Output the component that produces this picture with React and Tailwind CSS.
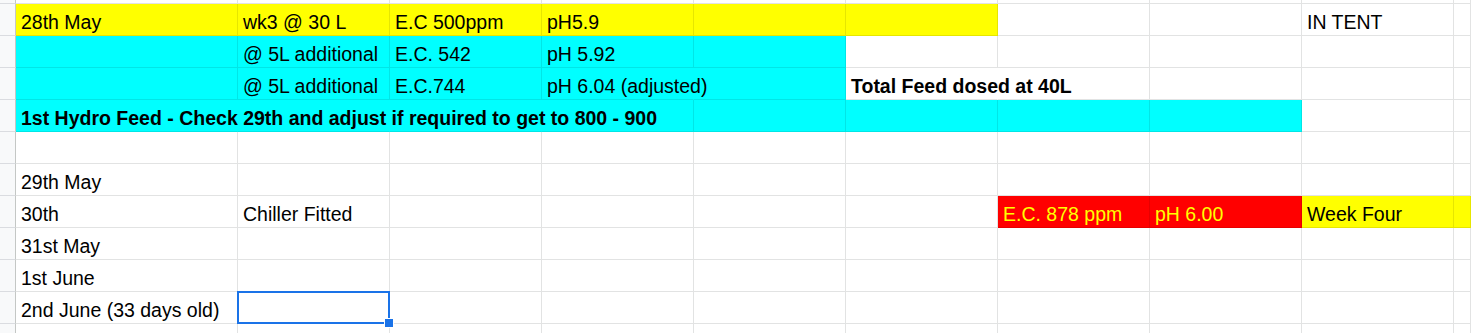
import React from "react";

const V = {
  w: "bg-white border-[#e2e3e3]",
  y: "bg-[#ffff00] border-[#e6e600]",
  c: "bg-[#00ffff] border-[#00e6e6]",
  r: "bg-[#ff0000] border-[#e60000]",
};

const WIDTHS = [
  "w-[222px]",
  "w-[152px]",
  "w-[152px]",
  "w-[152px]",
  "w-[152px]",
  "w-[152px]",
  "w-[152px]",
  "w-[152px]",
  "w-[152px]",
  "flex-1",
];

const rows = [
  [
    ["y", "28th May"],
    ["y", "wk3 @ 30 L"],
    ["y", "E.C 500ppm"],
    ["y", "pH5.9"],
    ["y"],
    ["y"],
    ["w"],
    ["w"],
    ["w", "IN TENT"],
    ["w"],
  ],
  [
    ["c"],
    ["c", "@ 5L additional"],
    ["c", "E.C. 542"],
    ["c", "pH 5.92"],
    ["c"],
    ["w"],
    ["w"],
    ["w"],
    ["w"],
    ["w"],
  ],
  [
    ["c"],
    ["c", "@ 5L additional"],
    ["c", "E.C.744"],
    ["c", "pH 6.04 (adjusted)", { ov: true }],
    ["c"],
    ["w", "Total Feed dosed at 40L", { ov: true, bold: true }],
    ["w"],
    ["w"],
    ["w"],
    ["w"],
  ],
  [
    ["c", "1st Hydro Feed - Check 29th and adjust if required to get to 800 - 900", { ov: true, bold: true }],
    ["c", null, { ov: true }],
    ["c", null, { ov: true }],
    ["c"],
    ["c"],
    ["c"],
    ["c"],
    ["c"],
    ["w"],
    ["w"],
  ],
  [["w"], ["w"], ["w"], ["w"], ["w"], ["w"], ["w"], ["w"], ["w"], ["w"]],
  [["w", "29th May"], ["w"], ["w"], ["w"], ["w"], ["w"], ["w"], ["w"], ["w"], ["w"]],
  [
    ["w", "30th"],
    ["w", "Chiller Fitted"],
    ["w"],
    ["w"],
    ["w"],
    ["w"],
    ["r", "E.C. 878 ppm", { yellow: true }],
    ["r", "pH 6.00", { yellow: true }],
    ["y", "Week Four"],
    ["y"],
  ],
  [["w", "31st May"], ["w"], ["w"], ["w"], ["w"], ["w"], ["w"], ["w"], ["w"], ["w"]],
  [["w", "1st June"], ["w"], ["w"], ["w"], ["w"], ["w"], ["w"], ["w"], ["w"], ["w"]],
  [
    ["w", "2nd June (33 days old)"],
    ["w", null, { sel: true }],
    ["w"],
    ["w"],
    ["w"],
    ["w"],
    ["w"],
    ["w"],
    ["w"],
    ["w"],
  ],
];

function Cell({ v, text, opts = {}, width }) {
  return (
    <div
      className={`relative shrink-0 h-full border-r border-b flex items-end pl-[5px] pb-[2px] ${width} ${V[v]} ${
        opts.ov ? "border-r-transparent" : ""
      }`}
    >
      {text ? (
        <span
          className={`relative z-10 whitespace-nowrap leading-[22px] ${
            opts.bold ? "font-bold" : "font-normal"
          } ${opts.yellow ? "text-[#ffff00]" : "text-black"}`}
        >
          {text}
        </span>
      ) : null}
      {opts.sel ? (
        <div className="absolute -left-px -top-px w-[153px] h-[33px] border-2 border-[#1a73e8] z-20">
          <div className="absolute left-[145px] top-[25px] w-[10px] h-[10px] bg-[#1a73e8] border border-white" />
        </div>
      ) : null}
    </div>
  );
}

function Row({ cells, h }) {
  return (
    <div className={`flex ${h}`}>
      <div className="shrink-0 w-[16px] h-full bg-[#f8f9fa] border-r border-r-[#c4c7c5] border-b border-b-[#dadce0]" />
      {cells.map((c, i) => (
        <Cell key={i} v={c[0]} text={c[1]} opts={c[2]} width={WIDTHS[i]} />
      ))}
    </div>
  );
}

export default function App() {
  const empty = WIDTHS.map(() => ["w"]);
  return (
    <div
      className="w-[1471px] h-[333px] overflow-hidden bg-white text-[19.5px]"
      style={{ fontFamily: '"Liberation Sans", Arial, sans-serif' }}
    >
      <Row cells={empty} h="h-[4px]" />
      {rows.map((r, i) => (
        <Row key={i} cells={r} h="h-[32px]" />
      ))}
      <Row cells={empty} h="h-[20px]" />
    </div>
  );
}
